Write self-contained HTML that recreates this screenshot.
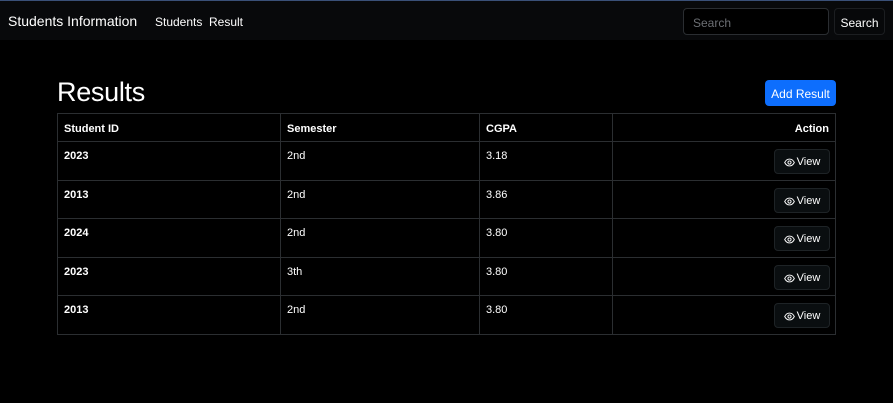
<!DOCTYPE html>
<html><head><style>
*{box-sizing:border-box;margin:0;padding:0}
body{width:893px;height:403px;background:#000;font-family:"Liberation Sans",sans-serif;color:#fff;position:relative;overflow:hidden}
.nav{position:absolute;left:0;top:0;width:893px;height:40px;background:#08090b;border-top:1px solid #3a5078}
.brand{position:absolute;left:8px;top:12px;font-size:14px}
.lk{position:absolute;top:14px;font-size:12px}
.sin{position:absolute;left:683px;top:7px;width:146px;height:27px;border:1px solid #2a2d31;border-radius:4px;background:#000;color:#6c6f74;font-size:12px;padding:7px 9px}
.sbt{position:absolute;left:834px;top:7px;width:51px;height:27px;border:1px solid #1c1e21;border-radius:4px;background:#07080a;font-size:12px;padding:7px 0;text-align:center}
h1{position:absolute;left:57px;top:77px;font-size:27px;font-weight:normal;letter-spacing:-0.3px}
.add{position:absolute;left:765px;top:80px;width:71px;height:26px;background:#0d6efd;border-radius:4px;font-size:12px;text-align:center;padding-top:7px}
table{position:absolute;left:57px;top:113px;width:779px;border-collapse:collapse;font-size:11px}
td,th{border:1px solid #2b2e31;padding:0 6px;text-align:left;vertical-align:top}
th{height:28px;padding-top:9px;font-weight:bold}
td{height:38.5px;padding-top:8px}
.r{text-align:right}
.v{display:inline-block;width:56px;height:25px;border:1px solid #1e2326;border-radius:4px;background:#0a0e10;font-size:11px;padding-top:6px;text-align:center;margin-top:-1px;margin-right:-1px}
.v svg{vertical-align:-2px;margin-right:2px}
</style></head><body>
<div class="nav"><div class="brand">Students Information</div><div class="lk" style="left:155px">Students</div><div class="lk" style="left:209px">Result</div>
<div class="sin">Search</div><div class="sbt">Search</div></div>
<h1>Results</h1><div class="add">Add Result</div>
<table>
<tr><th style="width:223px">Student ID</th><th style="width:199px">Semester</th><th style="width:133px">CGPA</th><th class="r">Action</th></tr>
<tr><td><b>2023</b></td><td>2nd</td><td>3.18</td><td class="r"><span class="v"><svg width="11" height="9" viewBox="0 0 16 12"><path d="M1 6C3 2 6 1 8 1s5 1 7 5c-2 4-5 5-7 5S3 10 1 6z" fill="none" stroke="#fff" stroke-width="1.4"/><circle cx="8" cy="6" r="2.3" fill="none" stroke="#fff" stroke-width="1.4"/></svg>View</span></td></tr>
<tr><td><b>2013</b></td><td>2nd</td><td>3.86</td><td class="r"><span class="v"><svg width="11" height="9" viewBox="0 0 16 12"><path d="M1 6C3 2 6 1 8 1s5 1 7 5c-2 4-5 5-7 5S3 10 1 6z" fill="none" stroke="#fff" stroke-width="1.4"/><circle cx="8" cy="6" r="2.3" fill="none" stroke="#fff" stroke-width="1.4"/></svg>View</span></td></tr>
<tr><td><b>2024</b></td><td>2nd</td><td>3.80</td><td class="r"><span class="v"><svg width="11" height="9" viewBox="0 0 16 12"><path d="M1 6C3 2 6 1 8 1s5 1 7 5c-2 4-5 5-7 5S3 10 1 6z" fill="none" stroke="#fff" stroke-width="1.4"/><circle cx="8" cy="6" r="2.3" fill="none" stroke="#fff" stroke-width="1.4"/></svg>View</span></td></tr>
<tr><td><b>2023</b></td><td>3th</td><td>3.80</td><td class="r"><span class="v"><svg width="11" height="9" viewBox="0 0 16 12"><path d="M1 6C3 2 6 1 8 1s5 1 7 5c-2 4-5 5-7 5S3 10 1 6z" fill="none" stroke="#fff" stroke-width="1.4"/><circle cx="8" cy="6" r="2.3" fill="none" stroke="#fff" stroke-width="1.4"/></svg>View</span></td></tr>
<tr><td><b>2013</b></td><td>2nd</td><td>3.80</td><td class="r"><span class="v"><svg width="11" height="9" viewBox="0 0 16 12"><path d="M1 6C3 2 6 1 8 1s5 1 7 5c-2 4-5 5-7 5S3 10 1 6z" fill="none" stroke="#fff" stroke-width="1.4"/><circle cx="8" cy="6" r="2.3" fill="none" stroke="#fff" stroke-width="1.4"/></svg>View</span></td></tr>
</table>
</body></html>
